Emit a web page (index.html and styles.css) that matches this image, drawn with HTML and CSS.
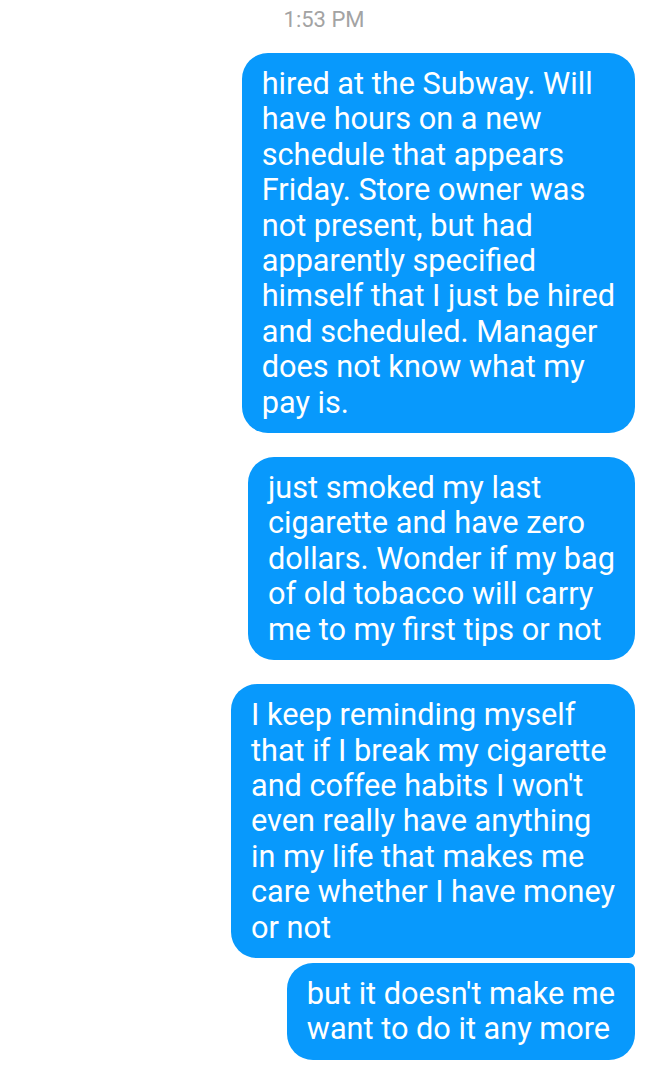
FILE: index.html
```html
<!DOCTYPE html>
<html>
<head>
<meta charset="utf-8">
<link rel="stylesheet" href="styles.css">
</head>
<body>
<div class="thread">
  <div class="time">1:53 PM</div>
  <div class="msg">hired at the Subway. Will<br>have hours on a new<br>schedule that appears<br>Friday. Store owner was<br>not present, but had<br>apparently specified<br>himself that I just be hired<br>and scheduled. Manager<br>does not know what my<br>pay is.</div>
  <div class="msg">just smoked my last<br>cigarette and have zero<br>dollars. Wonder if my bag<br>of old tobacco will carry<br>me to my first tips or not</div>
  <div class="group">
    <div class="msg first">I keep reminding myself<br>that if I break my cigarette<br>and coffee habits I won't<br>even really have anything<br>in my life that makes me<br>care whether I have money<br>or not</div>
    <div class="msg last">but it doesn't make me<br>want to do it any more</div>
  </div>
</div>
</body>
</html>
```
FILE: styles.css
```css
html, body {
  margin: 0;
  padding: 0;
  background: #ffffff;
}
.thread {
  display: flex;
  flex-direction: column;
  align-items: flex-end;
  gap: 24px;
  padding: 0 13px 0 0;
  font-family: Roboto, "Noto Sans", sans-serif;
}
.time {
  align-self: stretch;
  text-align: center;
  padding-left: 13px;
  color: #a3a3a3;
  font-size: 22px;
  line-height: 22px;
  padding-top: 9px;
  margin-bottom: -2px;
}
.msg {
  background: #0899fc;
  color: #ffffff;
  font-size: 30.7px;
  line-height: 35.4px;
  padding: 13px 20px 13px 20px;
  border-radius: 26px;
  white-space: nowrap;
}
.group {
  display: flex;
  flex-direction: column;
  align-items: flex-end;
  gap: 5px;
}
.msg.first {
  border-bottom-right-radius: 6px;
}
.msg.last {
  border-top-right-radius: 6px;
}
```
